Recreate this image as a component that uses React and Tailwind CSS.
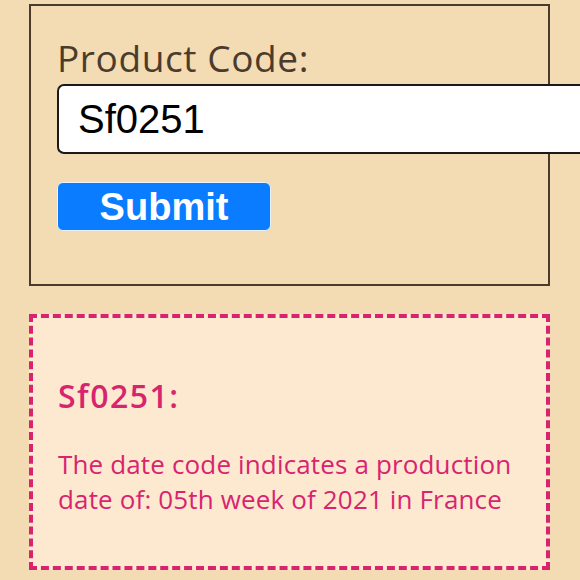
import React from "react";

const App = () => {
  return (
    <div className="w-[580px] h-[580px] overflow-hidden bg-[#f3dcb3] pl-[29px] pt-[4px] font-['Open_Sans',sans-serif]">
      <div className="w-[521px] h-[282px] border-2 border-[#4b3b2c] pl-[26px] pt-[29px]">
        <p className="text-[37px] leading-[46px] tracking-[0.6px] text-[#4b3b2c]">Product Code:</p>
        <input
          className="mt-[3px] w-[560px] h-[70px] bg-white border-2 border-[#1a1a1a] rounded-[7px] px-[19px] text-[40px] text-black font-['Liberation_Sans',Arial,sans-serif] outline-none"
          defaultValue="Sf0251"
        />
        <button className="mt-[28px] block w-[214px] h-[49px] bg-[#0a7cff] border border-[#e8f1ff] rounded-[6px] text-white font-bold text-[38px] leading-none font-['Liberation_Sans',Arial,sans-serif]">
          Submit
        </button>
      </div>

      <div className="mt-[28px] w-[521px] h-[256px] border-[4px] border-dashed border-[#d8246f] bg-[#fde9cf] pl-[25px] pt-[58px] text-[#d8246f]">
        <h3 className="text-[32px] leading-[40px] font-semibold tracking-[1.5px]">Sf0251:</h3>
        <p className="mt-[31px] text-[26px] leading-[35px] tracking-[0.15px]">
          The date code indicates a production date of: 05th week of 2021 in France
        </p>
      </div>
    </div>
  );
};

export default App;
